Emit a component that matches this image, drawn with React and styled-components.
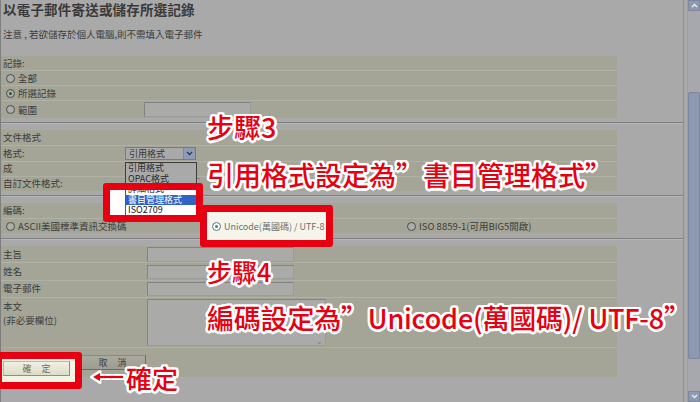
import styled, { createGlobalStyle } from "styled-components";

const RED = "#e60012";

const GlobalStyle = createGlobalStyle`
  html, body {
    margin: 0;
    padding: 0;
    background: #a9a9a9;
  }
  body {
    font-family: "Noto Sans CJK TC", "Noto Sans", sans-serif;
  }
`;

const Screen = styled.div`
  position: relative;
  display: flex;
  width: 700px;
  height: 402px;
  overflow: hidden;
  background: #a9a9a9;
`;

const Page = styled.div`
  flex: 1;
  margin-right: 3px;
  border-left: 1px solid #7e7e7c;
  border-right: 1px solid #8e8e8e;
  color: #3c3c3c;
  font-size: 9.5px;
`;

const Title = styled.h1`
  margin: 0;
  padding-left: 2px;
  font-size: 13.5px;
  line-height: 18px;
  font-weight: 700;
  color: #3a3a3a;
  letter-spacing: 0.2px;
`;

const Note = styled.p`
  margin: 9px 0 0;
  padding-left: 2px;
  height: 14px;
  line-height: 14px;
  font-size: 9.5px;
`;

const Section = styled.div`
  margin-top: ${(p) => p.$mt || 0}px;
  padding: ${(p) => p.$pt || 0}px 0 ${(p) => p.$pb || 0}px;
  border-bottom: ${(p) => (p.$last ? "none" : "1px solid #7f7f7b")};
  box-shadow: ${(p) => (p.$last ? "none" : "0 1px 0 #b6b6b4")};
  margin-bottom: ${(p) => (p.$last ? 0 : 1)}px;
`;

const Table = styled.div`
  width: 616px;
  display: flex;
  flex-direction: column;
`;

const Row = styled.div`
  box-sizing: border-box;
  height: ${(p) => p.$h}px;
  display: grid;
  grid-template-columns: ${(p) => p.$cols || "1fr"};
  align-items: ${(p) => p.$align || "center"};
  padding-left: 2px;
  background: #a4a597;
  border-top: 1px solid ${(p) => (p.$first ? "#a4a597" : "#afb0a6")};
`;

const Label = styled.span`
  white-space: nowrap;
  line-height: 13px;
  padding-bottom: 1px;
`;

const LabelStack = styled.div`
  padding-top: 1px;
  line-height: 14px;
  white-space: nowrap;
`;

const Choice = styled.label`
  display: flex;
  align-items: center;
  gap: 3px;
  padding-left: ${(p) => p.$pl || 3}px;
  white-space: nowrap;
  color: ${(p) => p.$color || "inherit"};
  font-size: ${(p) => p.$size || 9.5}px;
  height: ${(p) => (p.$fill ? "100%" : "auto")};
  visibility: ${(p) => (p.$covered ? "hidden" : "visible")};
`;

const Radio = styled.span`
  flex-shrink: 0;
  box-sizing: border-box;
  width: 9px;
  height: 9px;
  border-radius: 50%;
  border: 1px solid ${(p) => p.$ring || "#4b4b4b"};
  background: ${(p) => p.$bg || "#adadab"};
  display: flex;
  align-items: center;
  justify-content: center;

  &::after {
    content: "";
    width: 3px;
    height: 3px;
    border-radius: 50%;
    background: ${(p) => (p.$on ? p.$dot || "#2f5d2f" : "transparent")};
  }
`;

const Field = styled.div`
  box-sizing: border-box;
  width: ${(p) => p.$w}px;
  height: ${(p) => p.$h}px;
  margin-top: ${(p) => p.$mt || 0}px;
  border: 1px solid #838381;
  border-right-color: #9b9b99;
  border-bottom-color: #9b9b99;
  background: #aaaaa9;
  position: relative;
`;

const TextScrollArrow = styled.span`
  position: absolute;
  right: 2px;
  bottom: 0;
  font-size: 8px;
  line-height: 8px;
  color: #7d7d7d;
`;

const Select = styled.div`
  box-sizing: border-box;
  width: 71px;
  height: 13px;
  border: 1px solid #6f7b8e;
  background: #a9a9a9;
  display: flex;
  align-items: center;
  color: #333;
`;

const SelectText = styled.span`
  flex: 1;
  padding-left: 3px;
  font-size: 9px;
  line-height: 11px;
`;

const SelectArrow = styled.span`
  width: 11px;
  height: 11px;
  background: #8f9bb2;
  border-left: 1px solid #7b879d;
  display: flex;
  align-items: center;
  justify-content: center;
`;

const Columns = styled.div`
  display: grid;
  grid-template-columns: 203px 198px 1fr;
  align-items: center;
`;

const ButtonRow = styled.div`
  display: flex;
  align-items: center;
  gap: 8px;
  padding-left: 1px;
  padding-top: ${(p) => p.$pt || 0}px;
`;

const FormButton = styled.div`
  box-sizing: border-box;
  width: ${(p) => p.$w || 67}px;
  height: 15px;
  display: flex;
  align-items: center;
  justify-content: center;
  font-size: 9px;
  letter-spacing: 10px;
  text-indent: 10px;
  visibility: ${(p) => (p.$covered ? "hidden" : "visible")};
  color: ${(p) => (p.$lit ? "#6b6b5e" : "#3e3e3e")};
  background: ${(p) =>
    p.$lit
      ? "linear-gradient(#f1f1e4, #dcdcc6)"
      : "linear-gradient(#a9a99f, #9d9d92)"};
  border: 1px solid ${(p) => (p.$lit ? "#b9b9a4" : "#8a8a80")};
  border-bottom-color: ${(p) => (p.$lit ? "#8f8f7c" : "#6c6c66")};
  border-right-color: ${(p) => (p.$lit ? "#8f8f7c" : "#6c6c66")};
`;

/* scrollbar */

const ScrollBar = styled.div`
  width: 12px;
  display: flex;
  flex-direction: column;
  background: #a6a8ad;
  border-left: 1px solid #9d9fa3;
`;

const ScrollBtn = styled.div`
  height: 11px;
  display: flex;
  align-items: center;
  justify-content: center;
  background: #8f9ab0;
  border: 1px solid #7d889e;
  box-sizing: border-box;
`;

const Track = styled.div`
  flex: 1;
  padding-top: ${(p) => p.$offset}px;
`;

const Thumb = styled.div`
  box-sizing: border-box;
  height: ${(p) => p.$h}px;
  background: #8d99b1;
  border: 1px solid #7a869c;
  border-radius: 2px;
`;

/* annotations that lie over the page */

const Spotlight = styled.div`
  position: absolute;
  left: ${(p) => p.$x}px;
  top: ${(p) => p.$y}px;
  width: ${(p) => p.$w}px;
  height: ${(p) => p.$h}px;
  box-sizing: border-box;
  border: 7px solid ${RED};
  border-radius: 3px;
  background: ${(p) => p.$bg || "#fff"};
  overflow: hidden;
`;

const Lens = styled.div`
  position: absolute;
  left: ${(p) => p.$x}px;
  top: ${(p) => p.$y}px;
`;

const DropList = styled.div`
  position: absolute;
  left: ${(p) => p.$x}px;
  top: ${(p) => p.$y}px;
  width: 72px;
  box-sizing: border-box;
  border: 1px solid ${(p) => (p.$lit ? "#555" : "#3c3c3c")};
  background: ${(p) => (p.$lit ? "#fff" : "#a9a9a9")};
  font-size: 9px;
  color: ${(p) => (p.$lit ? "#111" : "#2a2a2a")};
`;

const DropItem = styled.div`
  height: 10.5px;
  line-height: 10.5px;
  padding-left: 2px;
  white-space: nowrap;
  visibility: ${(p) => (p.$covered ? "hidden" : "visible")};
  background: ${(p) => (p.$sel ? "#3062c8" : "transparent")};
  color: ${(p) => (p.$sel ? "#fff" : "inherit")};
`;

const Callout = styled.div`
  position: absolute;
  left: ${(p) => p.$x}px;
  top: ${(p) => p.$y}px;
  font-size: ${(p) => p.$size}px;
  letter-spacing: ${(p) => p.$ls || 0}px;
  line-height: 1;
  font-weight: 500;
  color: ${RED};
  white-space: nowrap;
  text-shadow: 2.5px 0 #fff, -2.5px 0 #fff, 0 2.5px #fff, 0 -2.5px #fff,
    1.8px 1.8px #fff, -1.8px -1.8px #fff, 1.8px -1.8px #fff,
    -1.8px 1.8px #fff, 1px 2.3px #fff, -1px -2.3px #fff, 2.3px 1px #fff,
    -2.3px -1px #fff, 1px -2.3px #fff, -1px 2.3px #fff, 2.3px -1px #fff,
    -2.3px 1px #fff;
`;

const ArrowMark = styled.svg`
  position: absolute;
  left: 90px;
  top: 369px;
`;

const Chevron = ({ up, color = "#fff" }) => (
  <svg width="7" height="5" viewBox="0 0 7 5">
    <path
      d={up ? "M1 4 L3.5 1.5 L6 4" : "M1 1 L3.5 3.5 L6 1"}
      fill="none"
      stroke={color}
      strokeWidth="1.4"
    />
  </svg>
);

const formatItems = ["引用格式", "OPAC格式", "詳細格式", "書目管理格式", "ISO2709"];

// the dimmed list hides the rows that the red spotlight shows lit
const Options = ({ lit }) =>
  formatItems.map((t, i) => (
    <DropItem key={t} $sel={lit && i === 3} $covered={lit ? i < 2 : i > 2}>
      {t}
    </DropItem>
  ));

export default function App() {
  return (
    <Screen>
      <GlobalStyle />
      <Page>
        <Title>以電子郵件寄送或儲存所選記錄</Title>
        <Note>注意 , 若欲儲存於個人電腦,則不需填入電子郵件</Note>

        <Section $mt={15} $pb={4}>
          <Table>
            <Row $h={14} $first>
              <Label>記錄:</Label>
            </Row>
            <Row $h={15}>
              <Choice>
                <Radio />
                全部
              </Choice>
            </Row>
            <Row $h={15}>
              <Choice>
                <Radio $on />
                所選記錄
              </Choice>
            </Row>
            <Row $h={18} $cols="141px 1fr">
              <Choice>
                <Radio />
                範圍
              </Choice>
              <Field $w={107} $h={15} />
            </Row>
          </Table>
        </Section>

        <Section $pt={6} $pb={4}>
          <Table>
            <Row $h={15} $first>
              <Label>文件格式</Label>
            </Row>
            <Row $h={16} $cols="122px 1fr">
              <Label>格式:</Label>
              <Select>
                <SelectText>引用格式</SelectText>
                <SelectArrow>
                  <Chevron color="#2c3e66" />
                </SelectArrow>
              </Select>
            </Row>
            <Row $h={15}>
              <Label>成</Label>
            </Row>
            <Row $h={15} $cols="122px 1fr">
              <Label>自訂文件格式:</Label>
              <Field $w={75} $h={12} />
            </Row>
          </Table>
        </Section>

        <Section $pt={6} $pb={5}>
          <Table>
            <Row $h={15} $first>
              <Label>編碼:</Label>
            </Row>
            <Row $h={15}>
              <Columns>
                <Choice>
                  <Radio />
                  ASCII美國標準資訊交換碼
                </Choice>
                <Choice $pl={5} $covered>
                  <Radio $on />
                  Unicode(萬國碼) / UTF-8
                </Choice>
                <Choice>
                  <Radio />
                  ISO 8859-1(可用BIG5開啟)
                </Choice>
              </Columns>
            </Row>
          </Table>
        </Section>

        <Section $pt={6} $last>
          <Table>
            <Row $h={16} $first $cols="144px 1fr">
              <Label>主旨</Label>
              <Field $w={147} $h={15} />
            </Row>
            <Row $h={18} $cols="144px 1fr">
              <Label>姓名</Label>
              <Field $w={147} $h={14} />
            </Row>
            <Row $h={17} $cols="144px 1fr">
              <Label>電子郵件</Label>
              <Field $w={147} $h={14} />
            </Row>
            <Row $h={50} $cols="144px 1fr" $align="start">
              <LabelStack>
                本文
                <br />
                (非必要欄位)
              </LabelStack>
              <Field $w={179} $h={47} $mt={1}>
                <TextScrollArrow>⌄</TextScrollArrow>
              </Field>
            </Row>
            <Row $h={30}>
              <ButtonRow>
                <FormButton $covered>確定</FormButton>
                <FormButton>取消</FormButton>
              </ButtonRow>
            </Row>
          </Table>
        </Section>
      </Page>

      <ScrollBar>
        <ScrollBtn>
          <Chevron up color="#e8ecf4" />
        </ScrollBtn>
        <Track $offset={81}>
          <Thumb $h={267} />
        </Track>
        <ScrollBtn>
          <Chevron color="#e8ecf4" />
        </ScrollBtn>
      </ScrollBar>

      <DropList $x={125} $y={162}>
        <Options />
      </DropList>

      <Spotlight $x={103} $y={183} $w={100} $h={39}>
        <Lens $x={-110} $y={-190}>
          <DropList $x={125} $y={162} $lit>
            <Options lit />
          </DropList>
        </Lens>
      </Spotlight>

      <Spotlight $x={200} $y={205} $w={133} $h={42} $bg="#f5f5ec">
        <Choice $pl={5} $color="#6d6d6d" $size={9} $fill>
          <Radio $on $ring="#5a6f95" $bg="#fff" $dot="#2f9a3a" />
          Unicode(萬國碼) / UTF-8
        </Choice>
      </Spotlight>

      <Spotlight $x={-5} $y={352} $w={87} $h={37} $bg="#f3f3e6">
        <ButtonRow $pt={2}>
          <FormButton $lit>確定</FormButton>
        </ButtonRow>
      </Spotlight>

      <Callout $x={207} $y={113} $size={27}>步驟3</Callout>
      <Callout $x={207} $y={161} $size={27}>引用格式設定為”書目管理格式”</Callout>
      <Callout $x={207} $y={259} $size={25}>步驟4</Callout>
      <Callout $x={207} $y={304} $size={27} $ls={-0.2}>編碼設定為”Unicode(萬國碼)/ UTF-8”</Callout>
      <Callout $x={126} $y={365} $size={26}>確定</Callout>

      <ArrowMark width="36" height="16" viewBox="0 0 36 16">
        <path d="M5 8 H34" stroke="#fff" strokeWidth="6" strokeLinecap="round" />
        <path d="M1.5 8 L10 2.5 L10 13.5 Z" fill="#fff" stroke="#fff" strokeWidth="3" strokeLinejoin="round" />
        <path d="M8 8 H33" stroke={RED} strokeWidth="2.2" />
        <path d="M3 8 L10 4 L10 12 Z" fill={RED} />
      </ArrowMark>
    </Screen>
  );
}
